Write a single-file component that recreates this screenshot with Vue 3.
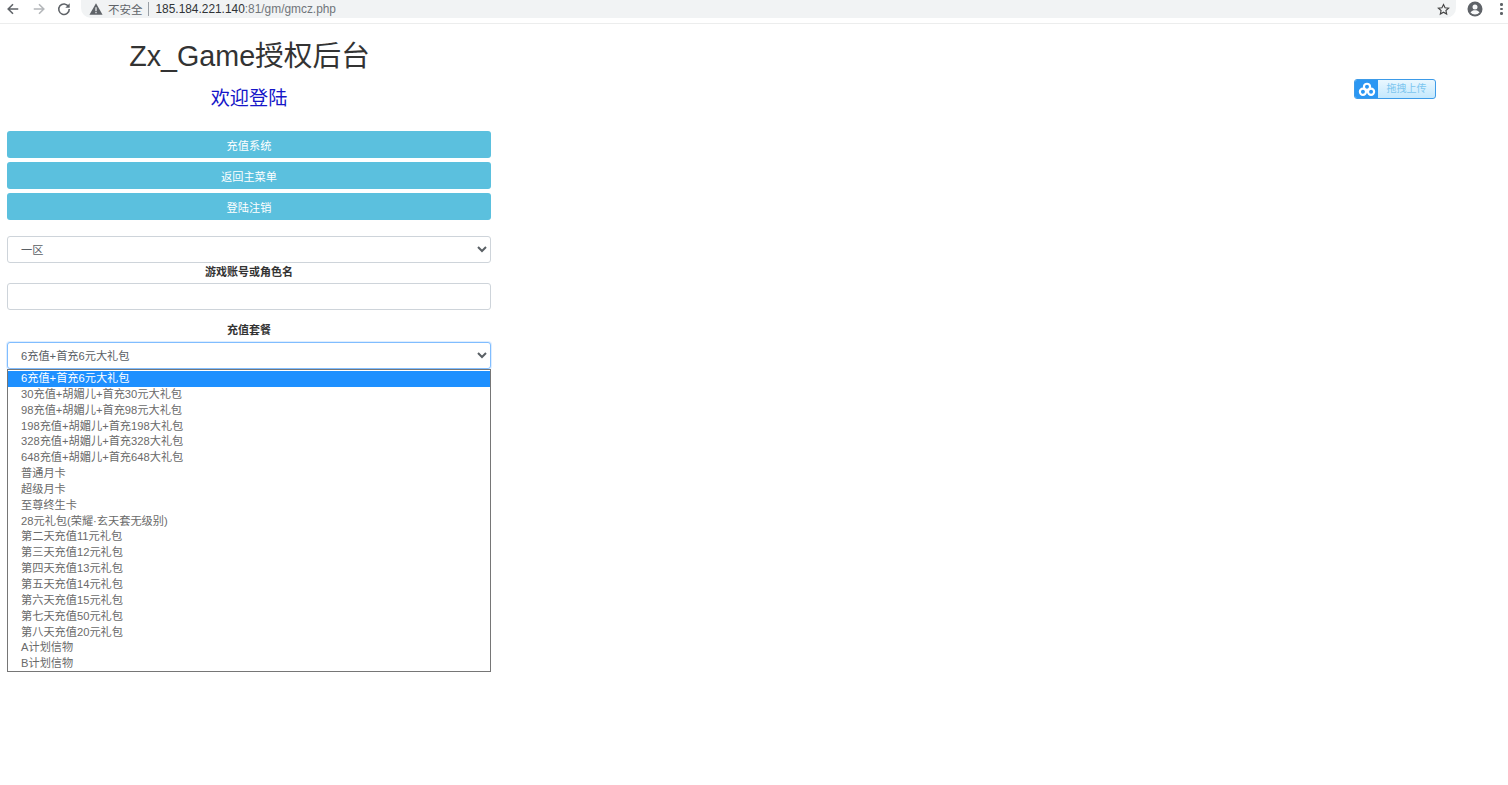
<script setup>
import { ref } from 'vue';

const zone = ref('一区');
const account = ref('');
const menus = ['充值系统', '返回主菜单', '登陆注销'];
const packages = [
  '6充值+首充6元大礼包',
  '30充值+胡媚儿+首充30元大礼包',
  '98充值+胡媚儿+首充98元大礼包',
  '198充值+胡媚儿+首充198大礼包',
  '328充值+胡媚儿+首充328大礼包',
  '648充值+胡媚儿+首充648大礼包',
  '普通月卡',
  '超级月卡',
  '至尊终生卡',
  '28元礼包(荣耀·玄天套无级别)',
  '第二天充值11元礼包',
  '第三天充值12元礼包',
  '第四天充值13元礼包',
  '第五天充值14元礼包',
  '第六天充值15元礼包',
  '第七天充值50元礼包',
  '第八天充值20元礼包',
  'A计划信物',
  'B计划信物'
];
const selected = ref(packages[0]);
</script>

<template>
  <div class="page">
    <header class="browser-bar">
      <div class="nav-icons">
        <svg viewBox="0 0 16 16" width="14" height="14"><path d="M14 8H3M8 2.500 2.500 8 8 13.500" fill="none" stroke="#5f6368" stroke-width="1.800"/></svg>
        <svg viewBox="0 0 16 16" width="14" height="14"><path d="M2 8h11M8 2.500 13.500 8 8 13.500" fill="none" stroke="#b4b7ba" stroke-width="1.800"/></svg>
        <svg viewBox="0 0 16 16" width="14" height="14"><path d="M13.200 5.200A6 6 0 1 0 14 8" fill="none" stroke="#5f6368" stroke-width="1.800"/><path d="M14.500 1.500v5h-5z" fill="#5f6368"/></svg>
      </div>
      <div class="omnibox">
        <svg class="warn" viewBox="0 0 16 16" width="14" height="14"><path d="M8 1.500 15.500 14.500H.5z" fill="#5f6368"/><path d="M7.300 6h1.400v4.500H7.300zM7.300 11.500h1.400v1.400H7.300z" fill="#f1f3f4"/></svg>
        <span class="insecure">不安全</span>
        <span class="divider"></span>
        <span class="url">185.184.221.140<span class="url-rest">:81/gm/gmcz.php</span></span>
        <svg class="star" viewBox="0 0 16 16" width="13" height="13"><path d="m8 1.800 1.900 4 4.400.5-3.300 3 .9 4.300L8 11.400l-3.900 2.200.9-4.300-3.300-3 4.400-.5z" fill="none" stroke="#444" stroke-width="1.400"/></svg>
      </div>
      <svg class="avatar" viewBox="0 0 16 16" width="16" height="16"><circle cx="8" cy="8" r="7.500" fill="#5f6368"/><circle cx="8" cy="6" r="2.500" fill="#f8f9fa"/><path d="M3.500 11.500c1-1.700 2.700-2.300 4.500-2.300s3.500.6 4.500 2.300A5.800 5.800 0 0 1 8 13.600a5.800 5.800 0 0 1-4.500-2.100z" fill="#f8f9fa"/></svg>
      <div class="dots"><i></i><i></i><i></i></div>
    </header>

    <div class="upload-badge">
      <span class="upload-icon">
        <svg viewBox="0 0 20 16" width="18" height="15"><g fill="none" stroke="#fff" stroke-width="2.400"><circle cx="10" cy="5" r="3.400"/><circle cx="5.500" cy="10.500" r="3.400"/><circle cx="14.500" cy="10.500" r="3.400"/></g></svg>
      </span>
      <span class="upload-text">拖拽上传</span>
    </div>

    <main class="panel">
      <h1 class="title">Zx_Game授权后台</h1>
      <h2 class="welcome">欢迎登陆</h2>

      <div class="menu">
        <button v-for="item in menus" :key="item" class="menu-button">{{ item }}</button>
      </div>

      <select v-model="zone" class="field zone">
        <option>一区</option>
      </select>
      <label class="field-label">游戏账号或角色名</label>
      <input v-model="account" class="field" type="text" />

      <label class="field-label package-label">充值套餐</label>
      <select v-model="selected" class="field focused">
        <option v-for="item in packages" :key="item">{{ item }}</option>
      </select>
      <ul class="dropdown">
        <li v-for="item in packages" :key="item" :class="{ active: item === selected }">{{ item }}</li>
      </ul>
    </main>
  </div>
</template>

<style>
html, body {
  background: #fff;
}
</style>

<style scoped>
.page {
  position: relative;
  height: 785px;
  overflow: hidden;
  font-family: "Liberation Sans", "Noto Sans CJK SC", sans-serif;
  color: #333;
}

.browser-bar {
  display: flex;
  align-items: center;
  height: 18px;
  padding-bottom: 5px;
  background: #fff;
  border-bottom: 1px solid #eceded;
}

.nav-icons {
  display: flex;
  gap: 11.500px;
  padding-left: 6px;
  width: 75px;
}

.omnibox {
  display: flex;
  align-items: center;
  width: 1367px;
  height: 18px;
  padding-left: 8px;
  background: #f1f3f4;
  border-radius: 0 0 10px 10px;
  font-size: 12px;
}

.warn {
  margin-right: 5px;
}

.insecure {
  color: #5f6368;
  font-size: 11.500px;
}

.divider {
  width: 1px;
  height: 14px;
  margin: 0 7px 0 5px;
  background: #9aa0a6;
}

.url {
  color: #303336;
  font-size: 11.900px;
}

.url-rest {
  color: #70757a;
}

.star {
  margin-left: auto;
  margin-right: 6px;
}

.avatar {
  margin-left: 11px;
}

.dots {
  display: flex;
  flex-direction: column;
  gap: 2px;
  margin-left: 17px;
}

.dots i {
  width: 2.500px;
  height: 2.500px;
  background: #5f6368;
  border-radius: 50%;
}

.upload-badge {
  position: absolute;
  left: 1354px;
  top: 79px;
  display: flex;
  width: 82px;
  height: 20px;
  box-sizing: border-box;
  border: 1px solid #3d9be8;
  border-radius: 3px;
  overflow: hidden;
  background: linear-gradient(#e9f7ff, #c4e8fd);
}

.upload-icon {
  display: flex;
  align-items: center;
  justify-content: center;
  width: 23px;
  background: #2b97f3;
}

.upload-text {
  flex: 1;
  text-align: center;
  font-size: 10px;
  line-height: 18px;
  color: #7cc6ef;
}

.panel {
  width: 484px;
  margin-left: 7px;
  display: flex;
  flex-direction: column;
}

.title {
  margin: 15px 0 0;
  padding-left: 1px;
  font-size: 28.700px;
  line-height: 34px;
  font-weight: 400;
  text-align: center;
  color: #333;
}

.welcome {
  margin: 15px 0 0;
  font-size: 19.200px;
  line-height: 21px;
  font-weight: 400;
  text-align: center;
  color: #1515c8;
}

.menu {
  display: flex;
  flex-direction: column;
  gap: 4px;
  margin-top: 22px;
}

.menu-button {
  height: 27px;
  padding: 0;
  border: none;
  border-radius: 3px;
  background: #5bc0de;
  color: #fff;
  font: inherit;
  font-size: 11.200px;
}

.field {
  display: block;
  width: 100%;
  height: 27px;
  box-sizing: border-box;
  padding: 0 9px;
  border: 1px solid #ced4da;
  border-radius: 3px;
  background: #fff;
  color: #5a6065;
  font-family: inherit;
  font-size: 11.200px;
  outline: none;
}

.zone {
  margin-top: 16px;
}

.field-label {
  margin: 2px 0 4px;
  font-size: 11px;
  line-height: 14px;
  font-weight: 700;
  text-align: center;
  color: #333;
}

.package-label {
  margin: 13px 0 5px;
}

.focused {
  border-color: #80bdff;
  box-shadow: 0 0 0 1px rgba(128, 189, 255, 0.25);
}

.dropdown {
  margin: 0;
  padding: 1px 0 0;
  list-style: none;
  border: 1px solid #767676;
  background: #fff;
  box-sizing: border-box;
  height: 303px;
}

.dropdown li {
  height: 15.850px;
  padding-left: 13px;
  font-size: 11.200px;
  line-height: 15.850px;
  color: #6a6a6a;
  white-space: nowrap;
}

.dropdown li.active {
  background: #1e90ff;
  color: #fff;
}
</style>
